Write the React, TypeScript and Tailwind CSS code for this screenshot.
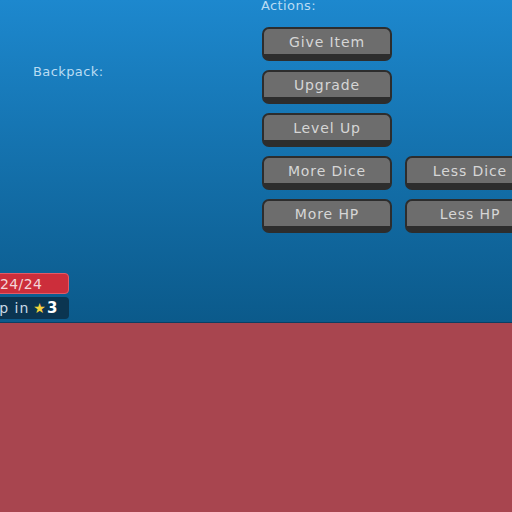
import React from 'react';

const font = { fontFamily: '"DejaVu Sans", "Liberation Sans", sans-serif' };

function GameButton({ label }: { label: string }) {
  return (
    <div className="w-[130px] h-[34px] rounded-[7px] border-2 border-b-[7px] border-[#2d2d2d] bg-[#6d6d6d] flex items-center justify-center shrink-0">
      <span className="text-[14px] leading-none tracking-[0.9px] text-[#d6d6d6]">{label}</span>
    </div>
  );
}

export default function App() {
  return (
    <div className="w-[512px] h-[512px] overflow-hidden flex flex-col bg-[#a8454f]" style={font}>
      <div className="h-[323px] shrink-0 flex bg-gradient-to-b from-[#1d88ce] to-[#0b5a8b] border-b border-[#0a3f63]">
        {/* left side */}
        <div className="w-[261px] shrink-0 flex flex-col">
          <div className="pl-[33px] pt-[62px] text-[13px] tracking-[0.4px] text-[#b9dcf3]">Backpack:</div>
          <div className="flex-1" />
          <div className="flex flex-col gap-[3px] mb-[3px] -ml-[12px]">
            <div className="w-[81px] h-[21px] rounded-r-[4px] bg-[#cc2e3b] border border-[#e35a66] flex items-center pl-[11px] text-[14px] leading-none tracking-[0.4px] text-[#f4d6d9]">
              24/24
            </div>
            <div className="w-[81px] h-[22px] rounded-r-[4px] bg-[#0b3551] flex items-center pl-[0px] text-[14px] leading-none tracking-[1px] text-[#c9d9e4]">
              <span>Up in </span>
              <span className="ml-[4px] text-[#f3d23c] text-[14px]">★</span>
              <span className="font-bold text-white text-[15px]">3</span>
            </div>
          </div>
        </div>
        {/* actions */}
        <div className="flex flex-col">
          <div className="-mt-[4px] h-[18px] text-[13px] tracking-[0.4px] text-[#b9dcf3]">Actions:</div>
          <div className="pl-[1px] pt-[13px] flex flex-col gap-[9px]">
            <GameButton label="Give Item" />
            <GameButton label="Upgrade" />
            <GameButton label="Level Up" />
            <div className="flex gap-[13px]">
              <GameButton label="More Dice" />
              <GameButton label="Less Dice" />
            </div>
            <div className="flex gap-[13px]">
              <GameButton label="More HP" />
              <GameButton label="Less HP" />
            </div>
          </div>
        </div>
      </div>
    </div>
  );
}
